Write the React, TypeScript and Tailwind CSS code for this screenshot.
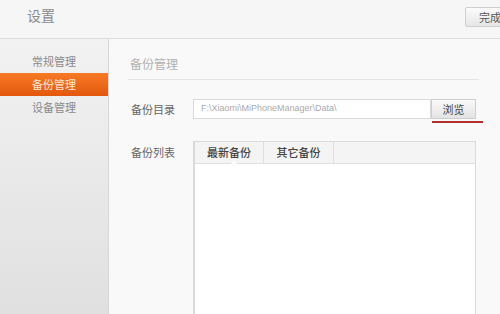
import React from "react";

export default function App() {
  const font = { fontFamily: '"Noto Sans CJK SC", "Noto Sans", sans-serif' };
  return (
    <div className="w-[500px] h-[314px] overflow-hidden flex flex-col bg-[#f7f7f7] text-[12px]" style={font}>
      <div className="h-[39px] shrink-0 flex items-start justify-between border-b border-[#dcdcdc] bg-[#f6f6f6] pl-[27px] pt-[7px]">
        <span className="text-[14px] text-[#8a8a8a] leading-[16px]">设置</span>
        <div className="h-[20px] w-[40px] -mr-[5px] pl-[13px] flex items-center border border-[#cfcfcf] rounded-[2px] bg-gradient-to-b from-[#fbfbfb] to-[#e6e6e6] text-[11px] text-[#555]">
          完成
        </div>
      </div>
      <div className="flex flex-1 min-h-0">
        <div className="w-[109px] shrink-0 border-r border-[#d6d6d6] bg-gradient-to-b from-[#f2f2f2] to-[#e0e0e0] pt-[11px] flex flex-col text-[11px]">
          <div className="h-[23px] pl-[32px] flex items-center text-[#8a8a8a]">常规管理</div>
          <div className="h-[23px] pl-[32px] flex items-center text-[#fde7d8] bg-gradient-to-b from-[#f77a24] to-[#e2570c]">备份管理</div>
          <div className="h-[23px] pl-[32px] flex items-center text-[#8a8a8a]">设备管理</div>
        </div>
        <div className="flex-1 bg-[#f9f9f9] pl-[19px] pt-[16px] flex flex-col">
          <div className="w-[351px] border-b border-[#e4e4e4] pb-[6px] pl-[2px] text-[12px] text-[#b0b0b0] leading-[18px]">备份管理</div>
          <div className="flex items-center mt-[19px] h-[20px]">
            <span className="w-[65px] pl-[3px] text-[#666] text-[11px]">备份目录</span>
            <div className="w-[238px] h-[20px] border border-[#dadada] bg-white flex items-center pl-[7px] text-[9px] text-[#aaa]" style={{ fontFamily: '"Liberation Sans", Arial, sans-serif' }}>
              F:\Xiaomi\MiPhoneManager\Data\
            </div>
            <div className="relative w-[45px] h-[20px] border border-[#cfcfcf] bg-gradient-to-b from-[#fafafa] to-[#e3e3e3] flex items-center justify-center text-[11px] text-[#444]">
              浏览
              <div className="absolute left-[0px] top-[21px] w-[51px] h-[2px] bg-[#b3302f]" />
            </div>
          </div>
          <div className="flex mt-[22px] flex-1 min-h-0">
            <span className="w-[65px] pl-[3px] pt-[3px] text-[#666] text-[11px] leading-[16px]">备份列表</span>
            <div className="w-[283px] flex flex-col border-l-2 border-r border-[#dadada] border-t">
              <div className="h-[22px] flex bg-[#f4f4f4] border-b border-[#dedede]">
                <div className="relative w-[69px] border-r border-[#dedede] flex items-center justify-center text-[11px] text-[#444] font-medium">
                  最新备份
                  <div className="absolute bottom-[-1px] left-[36px] w-0 h-0 border-l-[3px] border-r-[3px] border-b-[3px] border-l-transparent border-r-transparent border-b-white" />
                </div>
                <div className="w-[70px] border-r border-[#dedede] flex items-center justify-center text-[11px] text-[#444] font-medium">其它备份</div>
              </div>
              <div className="flex-1 bg-white" />
            </div>
          </div>
        </div>
      </div>
    </div>
  );
}
